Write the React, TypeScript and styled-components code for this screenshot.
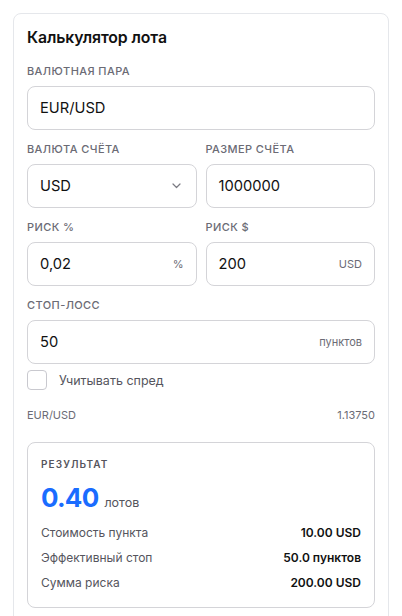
import React from "react";
import styled, { createGlobalStyle } from "styled-components";

const Global = createGlobalStyle`
  html, body { margin: 0; padding: 0; background: #ffffff; }
  body { font-family: Inter, "Noto Sans", sans-serif; color: #111827; }
  * { box-sizing: border-box; }
`;

const Page = styled.div`
  padding: 13px 13px 0 13px;
  height: 616px;
  overflow: hidden;
`;

const Card = styled.div`
  border: 1px solid #e5e7eb;
  border-radius: 8px;
  padding: 14px 13px 20px 13px;
  display: flex;
  flex-direction: column;
`;

const Title = styled.h2`
  margin: 0 0 16px 0;
  font-size: 15.8px;
  line-height: 20px;
  font-weight: 600;
  color: #111111;
  letter-spacing: -0.1px;
`;

const Field = styled.div`
  display: flex;
  flex-direction: column;
  gap: 8px;
  min-width: 0;
`;

const Label = styled.div`
  font-size: 11px;
  line-height: 14px;
  font-weight: 500;
  color: #6b6b75;
  text-transform: uppercase;
  letter-spacing: 0.4px;
`;

const Grid = styled.div`
  display: grid;
  grid-template-columns: 1fr 1fr;
  column-gap: 9px;
`;

const Stack = styled.div`
  display: flex;
  flex-direction: column;
  gap: 12px;
`;

const InputBox = styled.div`
  height: 44px;
  border: 1px solid #d4d4d8;
  border-radius: 8px;
  display: flex;
  align-items: center;
  padding: 0 12px;
  background: #fff;
`;

const Value = styled.span`
  flex: 1;
  font-size: 14.7px;
  color: #111111;
  white-space: nowrap;
`;

const Suffix = styled.span`
  font-size: 11px;
  color: #6b6b75;
`;

const Chevron = styled.svg`
  width: 9px;
  height: 6px;
  margin-right: 3px;
`;

const CheckRow = styled.label`
  display: flex;
  align-items: center;
  gap: 12px;
  margin-top: 6px;
`;

const Box = styled.span`
  width: 20px;
  height: 20px;
  border: 1px solid #c9c9cf;
  border-radius: 4px;
  background: #fff;
`;

const CheckText = styled.span`
  font-size: 12.5px;
  color: #55555d;
`;

const PairRow = styled.div`
  display: flex;
  justify-content: space-between;
  font-size: 11px;
  color: #6b6b75;
  margin-top: 18px;
`;

const Result = styled.div`
  margin-top: 20px;
  border: 1px solid #d4d4d8;
  border-radius: 8px;
  padding: 15px 13px 12px 13px;
  display: flex;
  flex-direction: column;
`;

const ResultLabel = styled.div`
  font-size: 10px;
  line-height: 13px;
  font-weight: 600;
  color: #55555d;
  letter-spacing: 1.1px;
  text-transform: uppercase;
`;

const Big = styled.div`
  display: flex;
  align-items: baseline;
  gap: 6px;
  margin-top: 10px;
  margin-bottom: 5px;
`;

const BigNum = styled.span`
  font-size: 26px;
  line-height: 34px;
  font-weight: 700;
  color: #1a6cff;
  letter-spacing: -0.8px;
`;

const BigUnit = styled.span`
  font-size: 12.5px;
  color: #55555d;
`;

const StatRow = styled.div`
  display: flex;
  justify-content: space-between;
  align-items: center;
  height: 25px;
  font-size: 12px;
`;

const StatName = styled.span`
  color: #55555d;
`;

const StatValue = styled.span`
  font-weight: 600;
  color: #111111;
`;

export default function App() {
  return (
    <>
      <Global />
      <Page>
        <Card>
          <Title>Калькулятор лота</Title>
          <Stack>
            <Field>
              <Label>Валютная пара</Label>
              <InputBox>
                <Value>EUR/USD</Value>
              </InputBox>
            </Field>
            <Grid>
              <Field>
                <Label>Валюта счёта</Label>
                <InputBox>
                  <Value>USD</Value>
                  <Chevron viewBox="0 0 9 6" fill="none">
                    <path d="M1 1l3.5 3.5L8 1" stroke="#7a7a82" strokeWidth="1.2" strokeLinecap="round" strokeLinejoin="round" />
                  </Chevron>
                </InputBox>
              </Field>
              <Field>
                <Label>Размер счёта</Label>
                <InputBox>
                  <Value>1000000</Value>
                </InputBox>
              </Field>
            </Grid>
            <Grid>
              <Field>
                <Label>Риск %</Label>
                <InputBox>
                  <Value>0,02</Value>
                  <Suffix>%</Suffix>
                </InputBox>
              </Field>
              <Field>
                <Label>Риск $</Label>
                <InputBox>
                  <Value>200</Value>
                  <Suffix>USD</Suffix>
                </InputBox>
              </Field>
            </Grid>
            <Field>
              <Label>Стоп-лосс</Label>
              <InputBox>
                <Value>50</Value>
                <Suffix>пунктов</Suffix>
              </InputBox>
            </Field>
          </Stack>
          <CheckRow>
            <Box />
            <CheckText>Учитывать спред</CheckText>
          </CheckRow>
          <PairRow>
            <span>EUR/USD</span>
            <span>1.13750</span>
          </PairRow>
          <Result>
            <ResultLabel>Результат</ResultLabel>
            <Big>
              <BigNum>0.40</BigNum>
              <BigUnit>лотов</BigUnit>
            </Big>
            <StatRow>
              <StatName>Стоимость пункта</StatName>
              <StatValue>10.00 USD</StatValue>
            </StatRow>
            <StatRow>
              <StatName>Эффективный стоп</StatName>
              <StatValue>50.0 пунктов</StatValue>
            </StatRow>
            <StatRow>
              <StatName>Сумма риска</StatName>
              <StatValue>200.00 USD</StatValue>
            </StatRow>
          </Result>
        </Card>
      </Page>
    </>
  );
}
